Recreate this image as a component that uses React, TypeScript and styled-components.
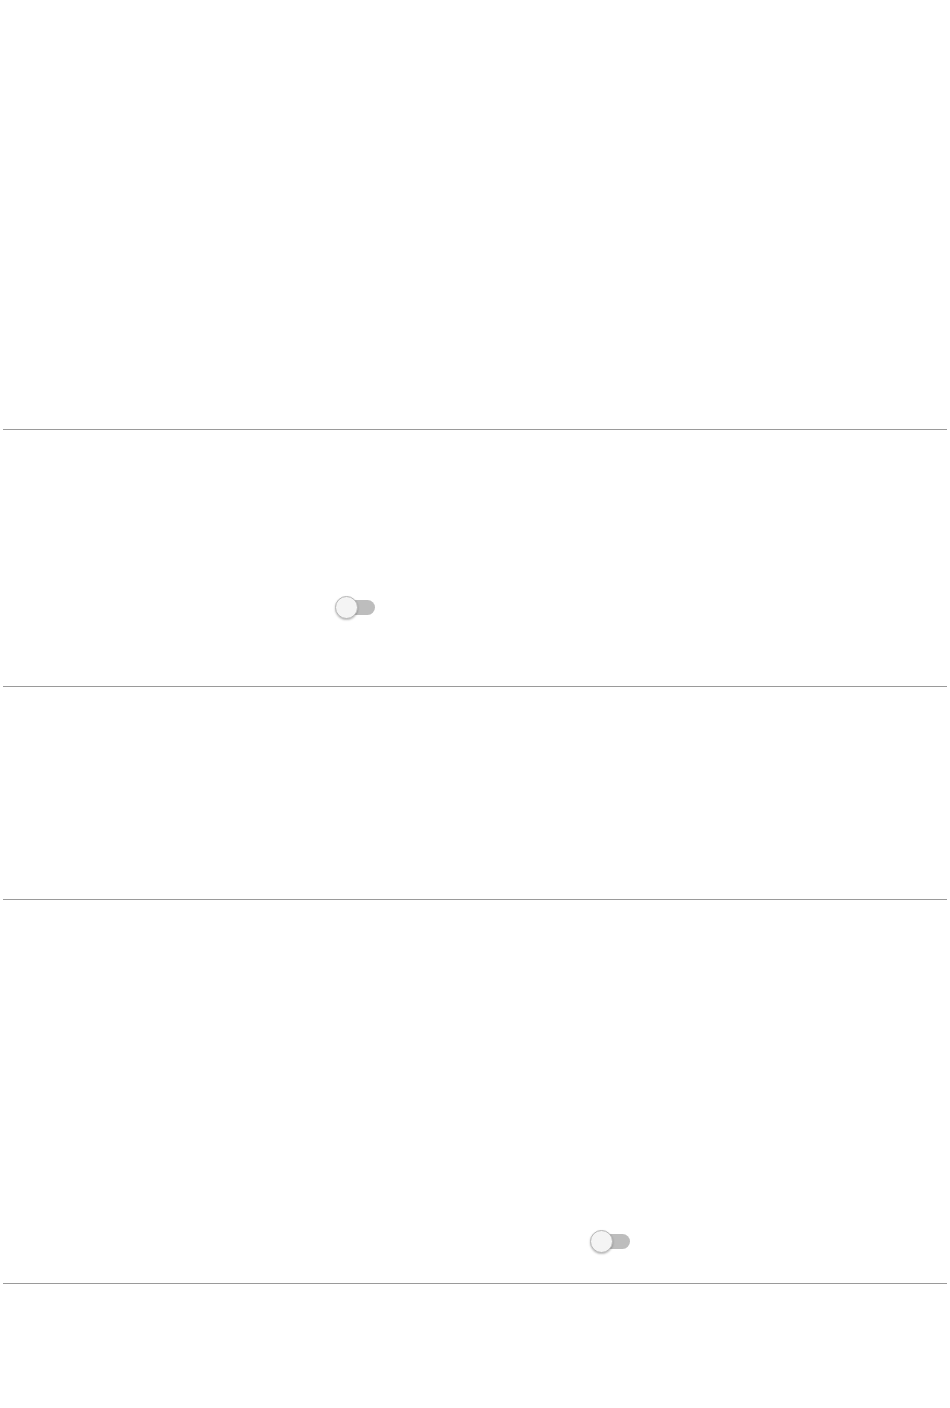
import React from "react";
import styled, { createGlobalStyle } from "styled-components";

const GlobalStyle = createGlobalStyle`
  html, body {
    margin: 0;
    padding: 0;
    background: #ffffff;
    font-family: "Liberation Sans", Arial, sans-serif;
  }
`;

const Page = styled.div`
  width: 950px;
  min-height: 1408px;
  padding: 0 3px;
  box-sizing: border-box;
  display: flex;
  flex-direction: column;
`;

const Section = styled.section<{ $h: number; $padTop?: number; $padLeft?: number; $last?: boolean }>`
  height: ${(p) => p.$h}px;
  box-sizing: border-box;
  padding-top: ${(p) => p.$padTop ?? 0}px;
  padding-left: ${(p) => p.$padLeft ?? 0}px;
  border-bottom: ${(p) => (p.$last ? "none" : "1px solid #9a9a9a")};
  display: flex;
  align-items: flex-start;
`;

const SwitchRoot = styled.div`
  display: flex;
  align-items: center;
  height: 24px;
`;

const Thumb = styled.span`
  position: relative;
  z-index: 1;
  width: 21px;
  height: 21px;
  border-radius: 50%;
  background: #f4f4f4;
  border: 1px solid #b8b8b8;
  box-shadow: 0 1px 2px rgba(0, 0, 0, 0.25);
`;

const Track = styled.span`
  width: 28px;
  height: 15px;
  margin-left: -11px;
  border-radius: 0 8px 8px 0;
  background: #bdbdbd;
`;

const Switch = () => (
  <SwitchRoot role="switch" aria-checked="false">
    <Thumb />
    <Track />
  </SwitchRoot>
);

export default function App() {
  return (
    <>
      <GlobalStyle />
      <Page>
        <Section $h={430} />
        <Section $h={257} $padTop={165} $padLeft={332}>
          <Switch />
        </Section>
        <Section $h={213} />
        <Section $h={384} $padTop={329} $padLeft={587}>
          <Switch />
        </Section>
        <Section $h={124} $last />
      </Page>
    </>
  );
}
